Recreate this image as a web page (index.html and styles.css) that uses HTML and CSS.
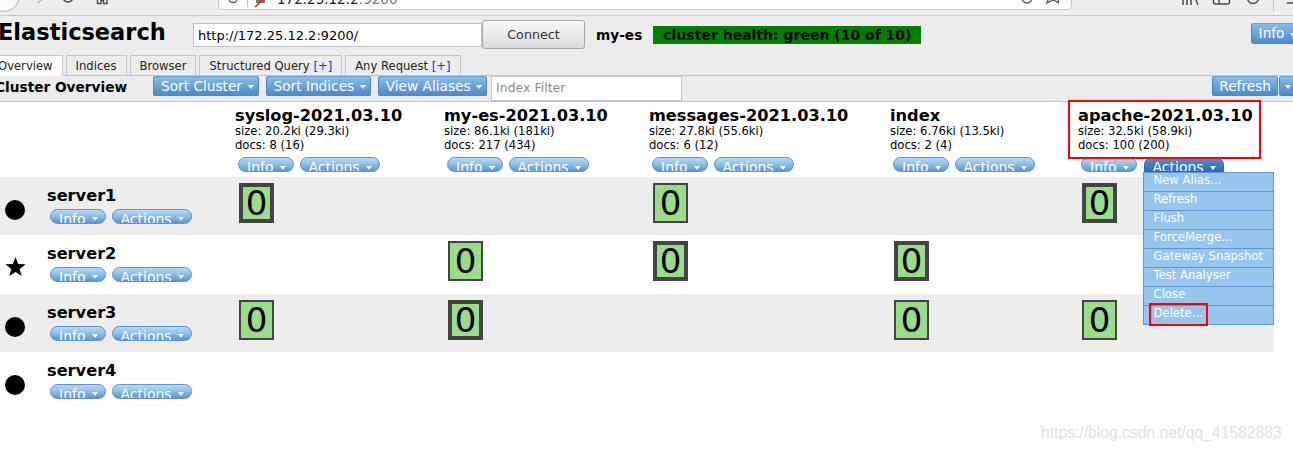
FILE: index.html
```html
<!DOCTYPE html>
<html lang="en">
<head>
<meta charset="utf-8">
<title>Elasticsearch Head</title>
<link rel="stylesheet" href="styles.css">
</head>
<body>
<div class="chrome">
  <svg class="nav-icons" width="218" height="15" viewBox="0 0 218 15">
    <circle cx="4" cy="-4" r="15.5" fill="#fafafa" stroke="#b3b3b3"/>
    <path d="M43 -2 L38 3" stroke="#b8b8b8" stroke-width="1.6" fill="none"/>
    <path d="M63 -3 A5 5 0 0 0 73 -3" stroke="#4a4a4a" stroke-width="1.6" fill="none"/>
    <path d="M97.5 -3 V3.5 H101 V0.5 H103.5 V3.5 H107 V-3" stroke="#4a4a4a" stroke-width="1.4" fill="none"/>
  </svg>
  <div class="urlbar">
    <svg class="u-info" width="10" height="9" viewBox="0 0 10 9"><circle cx="5" cy="-2" r="4.5" fill="none" stroke="#555" stroke-width="1.3"/></svg>
    <span class="u-sep"></span>
    <svg class="u-lock" width="12" height="9" viewBox="0 0 12 9"><rect x="1" y="-4" width="9" height="7" fill="#777"/><path d="M0 7 L11 -3" stroke="#e22" stroke-width="1.6"/></svg>
    <span class="u-text"><span class="u-host">172.25.12.2</span><span class="u-port">:9200</span></span>
    <svg class="u-right" width="40" height="9" viewBox="0 0 40 9"><circle cx="8" cy="-2" r="5" fill="none" stroke="#555" stroke-width="1.3"/><path d="M30 -3 L28 3 L34 0 L40 3 L38 -3" fill="none" stroke="#555" stroke-width="1.3"/></svg>
  </div>
  <svg class="tool-icons" width="221" height="15" viewBox="0 0 221 15">
    <path d="M111 -5 V5 M115 -5 V5 M119 -5 V5 M122 -5 L126 5" stroke="#4a4a4a" stroke-width="1.5" fill="none"/>
    <rect x="141.5" y="-8" width="16" height="12" rx="2" fill="none" stroke="#4a4a4a" stroke-width="1.4"/>
    <path d="M147 -8 V4" stroke="#4a4a4a" stroke-width="1.4"/>
    <circle cx="181" cy="-2" r="5.5" fill="none" stroke="#4a4a4a" stroke-width="1.4"/>
    <path d="M201.5 0 V12" stroke="#c8c8c8" stroke-width="1"/>
    <path d="M215 3 H225" stroke="#4a4a4a" stroke-width="1.5"/>
  </svg>
</div>

<div class="app">
  <header class="hdr">
    <h1 class="brand">Elasticsearch</h1>
    <input class="url-input" type="text" value="http://172.25.12.2:9200/">
    <button class="connect" type="button">Connect</button>
    <span class="cname">my-es</span>
    <span class="health">cluster health: green (10 of 10)</span>
    <span class="tbtn info-top">Info<i class="caret"></i></span>
  </header>

  <nav class="tabs">
    <span class="tab active">Overview</span>
    <span class="tab">Indices</span>
    <span class="tab">Browser</span>
    <span class="tab">Structured Query <span class="plus">[+]</span></span>
    <span class="tab">Any Request <span class="plus">[+]</span></span>
  </nav>

  <div class="toolbar">
    <span class="tb-title">Cluster Overview</span>
    <span class="tbtn">Sort Cluster<i class="caret"></i></span>
    <span class="tbtn">Sort Indices<i class="caret"></i></span>
    <span class="tbtn">View Aliases<i class="caret"></i></span>
    <input class="filter" type="text" placeholder="Index Filter">
    <span class="tbtn refresh">Refresh</span>
    <span class="tbtn rcaret"><i class="caret"></i></span>
  </div>

  <table class="ov">
    <colgroup>
      <col class="c0"><col class="c1"><col class="c2"><col class="c3"><col class="c4"><col class="c5">
    </colgroup>
    <thead>
      <tr class="hrow">
        <th class="nodehead"></th>
        <th class="idx">
          <div class="idx-name">syslog-2021.03.10</div>
          <div class="idx-meta">size: 20.2ki (29.3ki)</div>
          <div class="idx-meta">docs: 8 (16)</div>
          <div class="btns"><span class="pill">Info<i class="caret"></i></span><span class="pill">Actions<i class="caret"></i></span></div>
        </th>
        <th class="idx">
          <div class="idx-name">my-es-2021.03.10</div>
          <div class="idx-meta">size: 86.1ki (181ki)</div>
          <div class="idx-meta">docs: 217 (434)</div>
          <div class="btns"><span class="pill">Info<i class="caret"></i></span><span class="pill">Actions<i class="caret"></i></span></div>
        </th>
        <th class="idx">
          <div class="idx-name">messages-2021.03.10</div>
          <div class="idx-meta">size: 27.8ki (55.6ki)</div>
          <div class="idx-meta">docs: 6 (12)</div>
          <div class="btns"><span class="pill">Info<i class="caret"></i></span><span class="pill">Actions<i class="caret"></i></span></div>
        </th>
        <th class="idx">
          <div class="idx-name">index</div>
          <div class="idx-meta">size: 6.76ki (13.5ki)</div>
          <div class="idx-meta">docs: 2 (4)</div>
          <div class="btns"><span class="pill">Info<i class="caret"></i></span><span class="pill">Actions<i class="caret"></i></span></div>
        </th>
        <th class="idx">
          <div class="idx-name">apache-2021.03.10</div>
          <div class="idx-meta">size: 32.5ki (58.9ki)</div>
          <div class="idx-meta">docs: 100 (200)</div>
          <div class="btns wide"><span class="pill">Info<i class="caret"></i></span><span class="dd"><span class="pill on">Actions<i class="caret"></i></span>
            <ul class="menu">
              <li>New Alias...</li>
              <li>Refresh</li>
              <li>Flush</li>
              <li>ForceMerge...</li>
              <li>Gateway Snapshot</li>
              <li>Test Analyser</li>
              <li>Close</li>
              <li class="del">Delete...<span class="mark-del"></span></li>
            </ul></span></div>
          <span class="mark-idx"></span>
        </th>
      </tr>
    </thead>
    <tbody>
      <tr class="grey">
        <td class="node"><div class="node-in"><span class="nicon"><span class="dot"></span></span><div class="ninfo"><div class="nname">server1</div><div class="btns"><span class="pill">Info<i class="caret"></i></span><span class="pill">Actions<i class="caret"></i></span></div></div></div></td>
        <td class="sc"><div class="shard">0</div></td>
        <td class="sc"></td>
        <td class="sc"><div class="shard rep">0</div></td>
        <td class="sc"></td>
        <td class="sc"><div class="shard">0</div></td>
      </tr>
      <tr class="r2">
        <td class="node"><div class="node-in"><span class="nicon"><svg class="star" width="21" height="20" viewBox="0 0 21 20"><polygon points="10.5,0 13.1,6.9 20.5,7.3 14.7,11.9 16.7,19 10.5,15 4.3,19 6.3,11.9 0.5,7.3 7.9,6.9" fill="#000"/></svg></span><div class="ninfo"><div class="nname">server2</div><div class="btns"><span class="pill">Info<i class="caret"></i></span><span class="pill">Actions<i class="caret"></i></span></div></div></div></td>
        <td class="sc"></td>
        <td class="sc"><div class="shard rep">0</div></td>
        <td class="sc"><div class="shard">0</div></td>
        <td class="sc"><div class="shard">0</div></td>
        <td class="sc"></td>
      </tr>
      <tr class="grey">
        <td class="node"><div class="node-in"><span class="nicon"><span class="dot"></span></span><div class="ninfo"><div class="nname">server3</div><div class="btns"><span class="pill">Info<i class="caret"></i></span><span class="pill">Actions<i class="caret"></i></span></div></div></div></td>
        <td class="sc"><div class="shard rep">0</div></td>
        <td class="sc"><div class="shard">0</div></td>
        <td class="sc"></td>
        <td class="sc"><div class="shard rep">0</div></td>
        <td class="sc"><div class="shard rep">0</div></td>
      </tr>
      <tr>
        <td class="node"><div class="node-in"><span class="nicon"><span class="dot"></span></span><div class="ninfo"><div class="nname">server4</div><div class="btns"><span class="pill">Info<i class="caret"></i></span><span class="pill">Actions<i class="caret"></i></span></div></div></div></td>
        <td class="sc"></td>
        <td class="sc"></td>
        <td class="sc"></td>
        <td class="sc"></td>
        <td class="sc"></td>
      </tr>
    </tbody>
  </table>
</div>

<div class="wm">https://blog.csdn.net/qq_41582883</div>
</body>
</html>
```

FILE: styles.css
```css
html, body {
  margin: 0;
  padding: 0;
  overflow: hidden;
  background: #fff;
}
body {
  position: relative;
  width: 1293px;
  height: 452px;
  font-family: "DejaVu Sans", Verdana, sans-serif;
  color: #000;
}

/* browser chrome remnant */
.chrome {
  display: flex;
  height: 15px;
  background: #ededed;
  border-bottom: 1px solid #c9c9c9;
  overflow: hidden;
}
.nav-icons { flex: none; }
.urlbar {
  flex: none;
  width: 854px;
  height: 10px;
  box-sizing: border-box;
  background: #fff;
  border: 1px solid #c6c6c6;
  border-top: none;
  border-radius: 0 0 5px 5px;
  display: flex;
  align-items: flex-start;
  overflow: hidden;
}
.u-info { flex: none; margin-left: 9px; }
.u-sep {
  flex: none;
  width: 1px;
  height: 7px;
  background: #c8c8c8;
  margin-left: 9px;
}
.u-lock { flex: none; margin-left: 7px; }
.u-text {
  flex: none;
  margin: -8.4px 0 0 10px;
  font-size: 13.5px;
  line-height: 14px;
  white-space: nowrap;
}
.u-host { color: #222; }
.u-port { color: #777; }
.u-right { flex: none; margin-left: auto; margin-right: 12px; }
.tool-icons { flex: none; }

/* app */
.app {
  margin-left: -12px;
  width: 1320px;
}

.hdr {
  display: flex;
  align-items: flex-start;
  height: 39px;
  padding-right: 5px;
  box-sizing: border-box;
  background: #ececec;
}
.brand {
  flex: none;
  box-sizing: border-box;
  width: 205px;
  margin: 2.5px 0 0;
  padding-left: 10px;
  font-size: 22.5px;
  line-height: 26px;
  font-weight: bold;
}
.url-input {
  flex: none;
  margin: 7px 0 0;
  width: 289px;
  height: 24px;
  box-sizing: border-box;
  border: 1px solid #c3c3c3;
  background: #fff;
  padding: 0 4px;
  font-family: "DejaVu Sans", sans-serif;
  font-size: 13px;
  color: #000;
  outline: none;
}
.connect {
  flex: none;
  margin: 4px 0 0;
  width: 103px;
  height: 29px;
  box-sizing: border-box;
  border: 1px solid #a8a8a8;
  border-radius: 3px;
  background: linear-gradient(#f9f9f9, #dadada);
  font-family: "DejaVu Sans", sans-serif;
  font-size: 12.7px;
  color: #333;
  padding: 0;
}
.cname {
  flex: none;
  margin: 11.3px 0 0 11px;
  font-weight: bold;
  font-size: 13.7px;
  line-height: 16px;
}
.health {
  flex: none;
  margin: 10px 0 0 11px;
  height: 18px;
  padding: 0 10px;
  background: #008000;
  color: #000;
  font-weight: bold;
  font-size: 14px;
  line-height: 18px;
  white-space: nowrap;
}

/* blue toolbar buttons */
.tbtn {
  flex: none;
  display: flex;
  align-items: flex-start;
  height: 20px;
  box-sizing: border-box;
  padding: 0 4px 0 7px;
  border: 1px solid #4f88c2;
  border-top-color: #6c9fd4;
  border-radius: 2px;
  background: linear-gradient(#88bce7, #4d8aca);
  color: #fff;
  font-size: 13.7px;
  line-height: 18px;
  white-space: nowrap;
}
.tbtn + .tbtn { margin-left: 7px; }
.tbtn .caret { margin: 8px 0 0 5.5px; }
.info-top {
  margin-left: auto;
  margin-top: 7px;
  height: 21px;
  border-radius: 3px 0 0 3px;
  padding-right: 6px;
}
.info-top .caret { margin-top: 8.5px; }

.caret {
  flex: none;
  display: block;
  width: 0;
  height: 0;
  border-left: 3.5px solid transparent;
  border-right: 3.5px solid transparent;
  border-top: 4px solid #fff;
}

/* tabs */
.tabs {
  display: flex;
  align-items: flex-start;
  gap: 3px;
  height: 20px;
  border-bottom: 1px solid #c6c6c6;
  background: #ececec;
}
.tab {
  flex: none;
  height: 20px;
  box-sizing: border-box;
  border: 1px solid #c6c6c6;
  border-bottom: none;
  padding: 0 9px;
  font-size: 11.6px;
  line-height: 20px;
  color: #222;
  background: #ececec;
  white-space: nowrap;
}
.tab.active {
  background: #fff;
  height: 21px;
}
.plus { color: #2424ff; }

/* cluster toolbar */
.toolbar {
  display: flex;
  align-items: flex-start;
  height: 25px;
  padding-right: 11px;
  background: #ececec;
  border-bottom: 1px solid #c6c6c6;
}
.tb-title {
  flex: none;
  box-sizing: border-box;
  width: 165px;
  padding-left: 7px;
  font-weight: bold;
  font-size: 13.7px;
  line-height: 22px;
  white-space: nowrap;
}
.filter {
  flex: none;
  margin: 0 0 0 4px;
  width: 191px;
  height: 25px;
  box-sizing: border-box;
  border: 1px solid #c6c6c6;
  padding: 0 4px 3px;
  font-family: "DejaVu Sans", sans-serif;
  font-size: 12.5px;
  background: #fff;
  outline: none;
}
.filter::placeholder { color: #8a8a8a; }
.tbtn.refresh {
  margin-left: auto;
  padding: 0 6px;
}
.tbtn.rcaret {
  margin-left: 1px;
  width: 18px;
  padding: 0;
  justify-content: center;
}
.tbtn.rcaret .caret { margin: 8px 0 0; }

/* overview table */
.ov {
  border-collapse: collapse;
  table-layout: fixed;
  width: 1286px;
}
.c0 { width: 247px; }
.c1 { width: 209px; }
.c2 { width: 205px; }
.c3 { width: 241px; }
.c4 { width: 188px; }
.c5 { width: 196px; }
.ov th, .ov td {
  padding: 0;
  vertical-align: top;
  text-align: left;
  font-weight: normal;
}
.hrow { height: 75px; background: #fff; }
.ov .idx {
  position: relative;
  padding-top: 4px;
}
.idx-name {
  font-weight: bold;
  font-size: 16.2px;
  line-height: 19px;
  white-space: nowrap;
}
.idx-meta {
  font-size: 11.6px;
  line-height: 13.5px;
  white-space: nowrap;
}
.idx .btns { margin-top: 5px; }

.btns {
  display: flex;
  gap: 6px;
  margin-left: 3px;
}
.btns.wide { gap: 7px; }
.pill {
  flex: none;
  display: flex;
  align-items: flex-start;
  height: 15px;
  box-sizing: border-box;
  border: 1px solid #5e93cf;
  border-radius: 8px;
  padding: 0 7px 0 8px;
  background: linear-gradient(#b8d9f4 0%, #90c1ea 45%, #5896d6 100%);
  color: #fff;
  font-size: 14px;
  line-height: 19px;
  overflow: hidden;
  white-space: nowrap;
}
.pill .caret { margin: 7.5px 0 0 6px; }
.pill.on {
  background: linear-gradient(#4c90d4, #2c6db6);
  border-color: #2b63a6;
  border-radius: 8px 8px 0 0;
}
.dd {
  position: relative;
  display: block;
}
.menu {
  position: absolute;
  left: -1px;
  top: 15px;
  z-index: 5;
  width: 131px;
  box-sizing: border-box;
  margin: 0;
  padding: 0;
  list-style: none;
  border: 1px solid #5f96d4;
  background: #96c6ee;
}
.menu li {
  position: relative;
  height: 18px;
  padding-left: 10px;
  border-bottom: 1px solid #5f96d4;
  font-size: 11.65px;
  line-height: 15px;
  color: #fff;
  white-space: nowrap;
}
.menu li:last-child { border-bottom: none; }
.mark-del {
  position: absolute;
  left: 5px;
  top: -3px;
  width: 59px;
  height: 23px;
  box-sizing: border-box;
  border: 2px solid #f00;
}
.mark-idx {
  position: absolute;
  left: -10px;
  top: -2px;
  width: 193px;
  height: 59px;
  box-sizing: border-box;
  border: 2px solid #f00;
}

.ov tbody tr { height: 58px; }
.ov tbody tr.r2 { height: 59px; }
.grey { background: #ededed; }
.ov td.node { padding: 9px 0 0 17px; }
.node-in { display: flex; }
.nicon {
  flex: none;
  width: 21px;
  margin-top: 13.5px;
}
.dot {
  display: block;
  width: 20px;
  height: 20px;
  border-radius: 50%;
  background: #000;
}
.star { display: block; margin-top: -0.5px; }
.ninfo { margin-left: 21px; }
.nname {
  font-weight: bold;
  font-size: 16.2px;
  line-height: 19px;
}
.ninfo .btns { margin-top: 3.5px; }

.ov td.sc { padding: 6px 0 0 4px; }
.shard {
  width: 35px;
  height: 40px;
  box-sizing: border-box;
  background: #99dd88;
  border: 4px solid #444;
  display: flex;
  align-items: center;
  justify-content: center;
  font-size: 34px;
  line-height: 1;
  color: #000;
}
.shard.rep { border-width: 2px; }

/* watermark */
.wm {
  position: absolute;
  left: 1041px;
  top: 425px;
  font-family: "Liberation Sans", Arial, sans-serif;
  font-size: 15.7px;
  line-height: 16px;
  color: #e2e2e2;
  white-space: nowrap;
}
```
